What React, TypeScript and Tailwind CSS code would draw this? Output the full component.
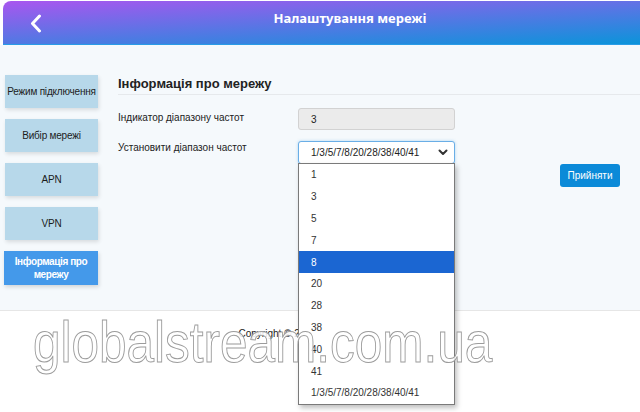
import { FC, JSX } from 'react';
import { clsx } from 'clsx';

const menuItems = ['Режим підключення', 'Вибір мережі', 'APN', 'VPN'];
const bandOptions = ['1', '3', '5', '7', '8', '20', '28', '38', '40', '41', '1/3/5/7/8/20/28/38/40/41'];
const selectedOption = '8';

const BackIcon: FC = (): JSX.Element => (
  <svg
    width="12"
    height="19"
    viewBox="0 0 12 19"
    fill="none"
    aria-hidden="true"
  >
    <polyline
      points="9.5,2 2.5,9.5 9.5,17"
      stroke="white"
      strokeWidth="3"
      strokeLinecap="round"
      strokeLinejoin="round"
    />
  </svg>
);

const SelectChevron: FC = (): JSX.Element => (
  <svg
    width="10"
    height="7"
    viewBox="0 0 10 7"
    fill="none"
    aria-hidden="true"
  >
    <polyline
      points="1.5,1.5 5,5 8.5,1.5"
      stroke="#333"
      strokeWidth="2"
      strokeLinecap="round"
      strokeLinejoin="round"
    />
  </svg>
);

export default function App(): JSX.Element {
  return (
    <div className="relative h-[412px] w-[640px] overflow-hidden bg-white font-['Liberation_Sans',Arial,sans-serif] text-[#222]">
      {/* Top bar */}
      <header className="mt-px ml-[3px] flex h-[44px] items-center rounded-tl-[8px] border-b border-[#2a9ce6] bg-[linear-gradient(177deg,#a956ef,#0b94da)]">
        <div className="flex w-[57px] items-center pl-[27px] pt-[2px]">
          <BackIcon />
        </div>
        <h1 className="flex-1 pb-[8px] text-center font-['Noto_Sans',sans-serif] text-[13px] font-bold text-white">
          Налаштування мережі
        </h1>
      </header>

      <div className="flex h-[265px] bg-[#f5f9fc]">
        {/* Side menu */}
        <nav className="flex w-[98px] shrink-0 flex-col gap-[11px] pt-[30px] pl-[5px]">
          {menuItems.map(item => (
            <div
              key={item}
              className="flex h-[33px] items-center justify-center bg-[#b7d8ea] text-center text-[10px] tracking-[-0.2px] text-[#1c1c1c] shadow-[1px_2px_4px_rgba(0,0,0,0.12)]"
            >
              {item}
            </div>
          ))}
          <div className="-ml-px flex h-[34px] items-center justify-center bg-[#4499ea] px-1 text-center text-[10px] leading-[13px] font-bold tracking-[-0.4px] text-white shadow-[1px_2px_4px_rgba(0,0,0,0.15)]">
            Інформація про мережу
          </div>
        </nav>

        {/* Content */}
        <main className="flex-1 pt-[31px] pl-[20px]">
          <h2 className="border-b border-[#e6e9ec] pb-[2px] text-[13px] leading-[16px] font-bold text-[#222]">
            Інформація про мережу
          </h2>

          <div className="mt-[13px] flex">
            <label className="w-[180px] pt-[4px] text-[10px] leading-[12px]">Індикатор діапазону частот</label>
            <div className="flex h-[22px] w-[157px] items-center rounded-[3px] border border-[#d2d2d2] bg-[#ebebeb] pl-[12px] text-[10px]">
              3
            </div>
          </div>

          <div className="mt-[11px] flex">
            <label className="w-[180px] pt-px text-[10px] leading-[12px]">Установити діапазон частот</label>
            <div className="flex h-[23px] w-[157px] items-center justify-between rounded-[3px] border border-[#6aaee6] bg-white pr-[6px] pl-[12px] text-[10px] shadow-[0_0_3px_rgba(102,175,233,0.5)]">
              <span>1/3/5/7/8/20/28/38/40/41</span>
              <SelectChevron />
            </div>
          </div>

          <div className="flex justify-end pr-[20px]">
            <button
              type="button"
              className="h-[23px] w-[60px] rounded-[3px] bg-[#0b8ad8] text-[10px] text-white"
            >
              Прийняти
            </button>
          </div>
        </main>
      </div>

      <footer className="h-[102px] border-t border-[#e6e6e6] bg-white pt-[15px] text-center text-[10px] text-[#222]">
        Copyright © 2020 All rights reserved.
      </footer>

      {/* Open select list */}
      <ul className="absolute top-[163px] left-[298px] w-[157px] border border-[#7a7a7a] bg-white shadow-[2px_3px_5px_rgba(0,0,0,0.25)]">
        {bandOptions.map(option => (
          <li
            key={option}
            className={clsx(
              'flex h-[21.8px] items-center pl-[12px] text-[10px]',
              option === selectedOption ? 'bg-[#1b66d2] text-white' : 'text-[#333]',
            )}
          >
            {option}
          </li>
        ))}
      </ul>

      {/* Watermark */}
      <div className="pointer-events-none absolute top-[314px] left-[33px] origin-left scale-x-[0.868] text-[57px] leading-none whitespace-nowrap text-white/85 [-webkit-text-stroke:1px_#9c9c9c]">
        globalstream.com.ua
      </div>
    </div>
  );
}
